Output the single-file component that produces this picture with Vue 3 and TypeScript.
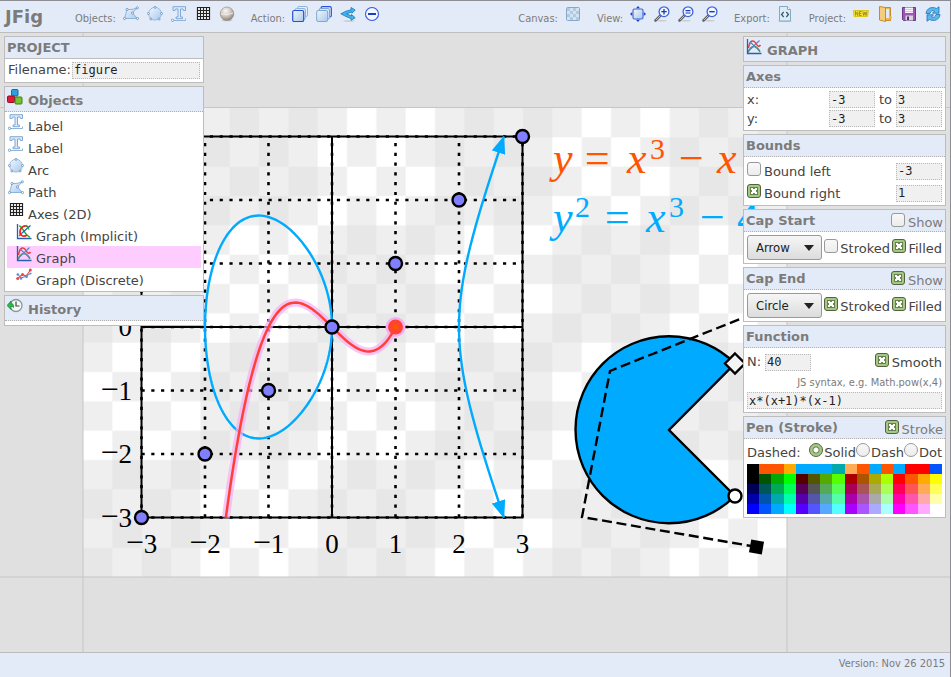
<script setup lang="ts">
import { reactive, ref } from 'vue'

type Tool = { icon: string; title: string }
type ToolGroup = { label: string; tools: Tool[] }
type SceneItem = { id: number; icon: string; name: string; nested?: boolean }
type Point = [number, number]

const createGroups: ToolGroup[] = [
  {
    label: 'Objects:',
    tools: [
      { icon: 'path', title: 'Path' },
      { icon: 'arc', title: 'Arc' },
      { icon: 'label', title: 'Label' },
      { icon: 'axes', title: 'Axes' },
      { icon: 'sphere', title: 'Sphere' },
    ],
  },
  {
    label: 'Action:',
    tools: [
      { icon: 'front', title: 'Bring to front' },
      { icon: 'back', title: 'Send to back' },
      { icon: 'fork', title: 'Duplicate' },
      { icon: 'remove', title: 'Delete' },
    ],
  },
]

const viewGroups: ToolGroup[] = [
  { label: 'Canvas:', tools: [{ icon: 'checker', title: 'Background' }] },
  {
    label: 'View:',
    tools: [
      { icon: 'fit', title: 'Fit' },
      { icon: 'zoom-in', title: 'Zoom in' },
      { icon: 'zoom-reset', title: 'Actual size' },
      { icon: 'zoom-out', title: 'Zoom out' },
    ],
  },
  { label: 'Export:', tools: [{ icon: 'code', title: 'Export source' }] },
  {
    label: 'Project:',
    tools: [
      { icon: 'new', title: 'New' },
      { icon: 'open', title: 'Open' },
      { icon: 'save', title: 'Save' },
      { icon: 'reload', title: 'Reload' },
    ],
  },
]

const sceneItems: SceneItem[] = [
  { id: 1, icon: 'label', name: 'Label' },
  { id: 2, icon: 'label', name: 'Label' },
  { id: 3, icon: 'arc', name: 'Arc' },
  { id: 4, icon: 'path', name: 'Path' },
  { id: 5, icon: 'axes', name: 'Axes (2D)' },
  { id: 6, icon: 'implicit', name: 'Graph (Implicit)', nested: true },
  { id: 7, icon: 'graph', name: 'Graph', nested: true },
  { id: 8, icon: 'discrete', name: 'Graph (Discrete)', nested: true },
]

const selected = ref(7)
const filename = ref('figure')
const axes = reactive({ x: ['-3', '3'], y: ['-3', '3'] })
const bounds = reactive({ left: false, right: true, min: '-3', max: '1' })
const caps = reactive([
  { key: 'start', title: 'Cap Start', show: false, shape: 'Arrow', stroked: false, filled: true },
  { key: 'end', title: 'Cap End', show: true, shape: 'Circle', stroked: true, filled: true },
])
const fn = reactive({ n: '40', smooth: true, body: 'x*(x+1)*(x-1)' })
const pen = reactive({ stroke: true, dash: 'Solid' })

const recent = '#000 #f50 #f50 #fa0 #0af #0af #0af #0aa #fa5 #f50 #0af #f50 #0af #f00 #f00 #05f'.split(' ')
const steps = ['0', '5', 'a', 'f']
const swatches = recent.concat(
  steps.flatMap((b) => steps.flatMap((r) => steps.map((g) => `#${r}${g}${b}`))),
)

// Plot space: one unit is 63.5px, y grows upwards.
const unit = 63.5
const ticks = [-3, -2, -1, 0, 1, 2, 3]
const lowerTicks = ticks.filter((t) => t <= 0)
const minus = '\u2212'

function toPath(points: Point[]): string {
  return points
    .map(([x, y], i) => `${i ? 'L' : 'M'}${(x * unit).toFixed(2)} ${(-y * unit).toFixed(2)}`)
    .join('')
}

function sample(from: number, to: number, count: number, f: (t: number) => Point): Point[] {
  return Array.from({ length: count + 1 }, (_, i) => f(from + ((to - from) * i) / count))
}

const elliptic = (x: number) => Math.sqrt(Math.max(0, x * x * x - 4 * x))
const oval = toPath(
  sample(0, 2 * Math.PI, 160, (t) => {
    const x = -1 + Math.cos(t)
    return [x, Math.sign(Math.sin(t)) * elliptic(x)]
  }),
)
const branch = toPath(
  sample(-1, 1, 40, (t) => {
    const x = 2 + 0.7065 * t * t
    return [x, Math.sign(t) * elliptic(x)]
  }),
)
const cubic = toPath(sample(-1.672, 1, 80, (x) => [x, x * x * x - x]))

// Background cells: a fine checker whose tint alternates every four cells.
const cell = 88 / 3
const cells = Array.from({ length: 64 }, (_, k) => ({ i: k % 8, j: Math.floor(k / 8) }))
  .filter(({ i, j }) => (i + j) % 2 === 1)
  .map(({ i, j }) => ({
    x: i * cell,
    y: j * cell,
    fill: (Math.floor(i / 4) + Math.floor(j / 4)) % 2 ? '#e7e7e7' : '#ffffff',
  }))
</script>

<template>
  <div class="app">
    <svg class="sprite" aria-hidden="true">
      <defs>
        <linearGradient id="g-blue" x1="0" y1="0" x2="1" y2="1">
          <stop offset="0" stop-color="#f0f6fd" />
          <stop offset="1" stop-color="#a9c9ea" />
        </linearGradient>
        <radialGradient id="g-ball" cx=".4" cy=".3" r=".75">
          <stop offset="0" stop-color="#fbf8f5" />
          <stop offset=".5" stop-color="#cfc6bf" />
          <stop offset="1" stop-color="#85796f" />
        </radialGradient>
      </defs>
      <symbol id="i-path" viewBox="0 0 16 16">
        <path d="M4 3.500Q9 4 14 2L9.500 7L14.300 12.500H1.600z" fill="url(#g-blue)" stroke="#8fb4da" />
        <g fill="#fff" stroke="#5d8fc2" stroke-width=".8">
          <circle cx="4" cy="3.500" r="1.100" /><circle cx="14.300" cy="1.800" r="1.100" /><circle cx="9.500" cy="7" r="1.100" />
          <circle cx="14.500" cy="12.500" r="1.100" /><circle cx="1.500" cy="12.500" r="1.100" />
        </g>
      </symbol>
      <symbol id="i-arc" viewBox="0 0 16 16">
        <circle cx="8" cy="7.700" r="6.400" fill="url(#g-blue)" stroke="#9dbde0" />
        <g fill="#fff" stroke="#5d8fc2" stroke-width=".8">
          <circle cx="8" cy="1.400" r="1" /><circle cx="14.600" cy="7.500" r="1" /><circle cx="1.400" cy="7.500" r="1" />
          <circle cx="3.800" cy="13" r="1" /><circle cx="12.200" cy="13" r="1" />
        </g>
      </symbol>
      <symbol id="i-label" viewBox="0 0 16 16">
        <path d="M2 .7H14.500V4.500H12.500L12 3H9.500V11H11.500V12.700H5V11H7V3H4.500L4 4.500H2z" fill="#dceafa" stroke="#7fa9d6" />
        <path d="M1.500 14.500H14.500V12.500" fill="none" stroke="#8fb4da" />
        <circle cx="1.500" cy="14.300" r="1.200" fill="#fff" stroke="#5d8fc2" stroke-width=".8" />
      </symbol>
      <symbol id="i-axes" viewBox="0 0 16 16">
        <rect x="2" y="1" width="12.500" height="12.500" fill="#fff" />
        <path d="M2 1.500H15M2 4.500H15M2 7.500H15M2 10.500H15M2 13.500H15M2.500 1V14M5.500 1V14M8.500 1V14M11.500 1V14M14.500 1V14" stroke="#222" stroke-width="1.200" />
      </symbol>
      <symbol id="i-sphere" viewBox="0 0 16 16">
        <ellipse cx="8" cy="14.300" rx="5.500" ry="1" fill="#c4c8d0" />
        <circle cx="8" cy="7.800" r="6.800" fill="url(#g-ball)" stroke="#91867d" stroke-width=".6" />
        <path d="M2 8Q8 10 14 7" fill="none" stroke="#eee9e4" />
      </symbol>
      <symbol id="i-front" viewBox="0 0 16 16">
        <rect x="5.500" y=".5" width="10" height="10" rx="1.500" fill="#e8f1fb" stroke="#8fb4da" />
        <rect x="3" y="2.500" width="10.500" height="10.500" rx="1.500" fill="#d9e8f8" stroke="#8fb4da" />
        <rect x=".7" y="4.500" width="11" height="11" rx="1.500" fill="url(#g-blue)" stroke="#2450d8" stroke-width="1.200" />
      </symbol>
      <symbol id="i-back" viewBox="0 0 16 16">
        <rect x="5" y=".7" width="10.300" height="10.300" rx="1.500" fill="#e8f1fb" stroke="#2450d8" stroke-width="1.200" />
        <rect x="3" y="2.500" width="10.500" height="10.500" rx="1.500" fill="#d9e8f8" stroke="#7ea6d2" />
        <rect x=".7" y="4.500" width="11" height="11" rx="1.500" fill="url(#g-blue)" stroke="#7ea6d2" />
      </symbol>
      <symbol id="i-fork" viewBox="0 0 16 16">
        <ellipse cx="9" cy="15" rx="6" ry=".7" fill="#c0c8d4" />
        <path d="M.8 7.800L6 5.200L11 3.800V1.500L15.200 4L12 7.200V6L6.500 7.800L11.500 10V8.500L15.200 11.800L11 14.300V12.500L6 10.500z" fill="#41b4ee" stroke="#1876b8" stroke-width=".8" stroke-linejoin="round" />
      </symbol>
      <symbol id="i-remove" viewBox="0 0 16 16">
        <circle cx="8" cy="8" r="6.500" fill="#f3f7fe" stroke="#3558dd" stroke-width="1.100" />
        <path d="M4 8H12" stroke="#1c3fc4" stroke-width="2" />
      </symbol>
      <symbol id="i-checker" viewBox="0 0 16 16">
        <rect x="1.500" y="1.500" width="13" height="13" rx="1" fill="#d3e3f1" stroke="#84a9cc" />
        <path d="M2 2h3v3H2zM8 2h3v3H8zM5 5h3v3H5zM11 5h3v3h-3zM2 8h3v3H2zM8 8h3v3H8zM5 11h3v3H5zM11 11h3v3h-3z" fill="#b0cadf" />
      </symbol>
      <symbol id="i-fit" viewBox="0 0 16 16">
        <rect x="3" y="3" width="10" height="10" rx="1.500" fill="url(#g-blue)" stroke="#3b62dd" stroke-width="1.100" />
        <path d="M8 0L10 2.200H6zM8 16L10 13.800H6zM0 8L2.200 6V10zM16 8L13.800 6V10z" fill="#1c3fc4" />
      </symbol>
      <symbol id="i-lens" viewBox="0 0 16 16">
        <ellipse cx="8" cy="14.700" rx="5" ry=".8" fill="#c5cad3" />
        <path d="M6.500 9.500L1.500 14.500" stroke="#5f646c" stroke-width="2.600" stroke-linecap="round" />
        <path d="M6.500 9.500L1.800 14.200" stroke="#b9bec6" />
        <circle cx="10" cy="5.700" r="4.900" fill="#f3f8ff" stroke="#3c63dc" stroke-width="1.300" />
      </symbol>
      <symbol id="i-zoom-in" viewBox="0 0 16 16">
        <use href="#i-lens" width="16" height="16" />
        <path d="M7.300 5.700H12.700M10 3V8.400" stroke="#1638b8" stroke-width="1.300" />
      </symbol>
      <symbol id="i-zoom-reset" viewBox="0 0 16 16">
        <use href="#i-lens" width="16" height="16" />
        <path d="M7.500 4.600H12.500M7.500 7H12.500" stroke="#1638b8" stroke-width="1.100" />
      </symbol>
      <symbol id="i-zoom-out" viewBox="0 0 16 16">
        <use href="#i-lens" width="16" height="16" />
        <path d="M7.300 5.700H12.700" stroke="#1638b8" stroke-width="1.400" />
      </symbol>
      <symbol id="i-code" viewBox="0 0 16 16">
        <ellipse cx="8" cy="15.200" rx="7" ry=".7" fill="#bcc3cf" />
        <path d="M2.500.5H10.500L13.500 3.500V15H2.500z" fill="#dcecf7" stroke="#86a9c2" />
        <path d="M10.500.5V3.500H13.500" fill="#fff" stroke="#86a9c2" />
        <path d="M6.700 6L4.500 8.500L6.700 11M9.300 6L11.500 8.500L9.300 11" fill="none" stroke="#35566e" stroke-width="1.200" />
      </symbol>
      <symbol id="i-new" viewBox="0 0 16 16">
        <path d="M.5 4.500H15.500L14.500 10.500H1z" fill="#f4e13b" stroke="#d9c520" />
        <path d="M2.500 9.500V5.500L4.800 9.500V5.500M8.700 5.500H6.500V9.500H8.700M6.500 7.500H8.300M9.900 5.500L10.700 9.500L11.900 6L13 9.500L13.900 5.500" fill="none" stroke="#94800c" stroke-width=".8" />
      </symbol>
      <symbol id="i-open" viewBox="0 0 16 16">
        <path d="M8 1.500H13.500V14.500H8z" fill="#e9b555" stroke="#c68a2c" />
        <rect x="9" y="3" width="3" height="9" fill="#dcebf8" />
        <path d="M2.500.5L8.500 1.500V15.500L2.500 14z" fill="#f5cd7a" stroke="#c68a2c" />
        <circle cx="13.500" cy="11.500" r="1.500" fill="#f4b642" />
      </symbol>
      <symbol id="i-save" viewBox="0 0 16 16">
        <path d="M1.500 1.500H14.500V14.500H2.500L1.500 13.500z" fill="#9c55b4" stroke="#673a82" />
        <rect x="4" y="1.500" width="8" height="5.500" fill="#f5f2f8" />
        <path d="M4 3.500H12M4 5.500H12" stroke="#c9bfd2" stroke-width=".7" />
        <rect x="4.500" y="9.500" width="7.500" height="5" fill="#d9d3df" />
        <rect x="6" y="10.500" width="2" height="3.500" fill="#573270" />
      </symbol>
      <symbol id="i-reload" viewBox="0 0 16 16">
        <path d="M1 7.500C1.500 2.500 6.500 0 11.500 2.500L14 .8V7.200H7.500L9.500 5C7.500 4 5.500 5 5 7.500z" fill="#5fb8ec" stroke="#1a72b8" stroke-width=".8" stroke-linejoin="round" />
        <path d="M15 8.500C14.500 13.500 9.500 16 4.500 13.500L2 15.200V8.800H8.500L6.500 11C8.500 12 10.500 11 11 8.500z" fill="#5fb8ec" stroke="#1a72b8" stroke-width=".8" stroke-linejoin="round" />
      </symbol>
      <symbol id="i-frame" viewBox="0 0 16 16">
        <path d="M1.500 0V14.500H15.500" fill="none" stroke="#2a5fae" stroke-width="1.300" />
      </symbol>
      <symbol id="i-graph" viewBox="0 0 16 16">
        <path d="M2 13.500C5 6 10 5 14 13" fill="none" stroke="#3d9c49" stroke-width="1.500" />
        <path d="M2.500 9C4 0 8 1 10 4.500S13 8 14.500 6" fill="none" stroke="#f03a3a" stroke-width="1.500" />
        <path d="M2.500 12L13.500 1.500M4 3L14 12" fill="none" stroke="#5b85bf" stroke-width="1.100" />
        <use href="#i-frame" width="16" height="16" />
      </symbol>
      <symbol id="i-implicit" viewBox="0 0 16 16">
        <path d="M3 2C6 1 9 12 14 13M3 12L6 9" fill="none" stroke="#14b83a" stroke-width="1.500" />
        <path d="M12.500 3.500C9 0 4.500 3 4 7.500S8 13 11 11" fill="none" stroke="#f01f1f" stroke-width="1.700" />
        <path d="M6 9L14.500 1.500" stroke="#2a5fae" stroke-width="1.300" />
        <path d="M10 1L13 5.500" stroke="#14b83a" stroke-width="1.300" />
        <use href="#i-frame" width="16" height="16" />
      </symbol>
      <symbol id="i-discrete" viewBox="0 0 16 16">
        <path d="M2 6.500L5 10L10.500 8L14.500 5.500" fill="none" stroke="#4b7fc4" stroke-width="1" />
        <path d="M1.500 10.500L6.500 6.500L10 8L14.500 2" fill="none" stroke="#ef4545" stroke-width="1.100" />
        <g fill="#ef4545"><circle cx="1.700" cy="10.500" r="1.500" /><circle cx="6.500" cy="6.500" r="1.500" /><circle cx="14.300" cy="2" r="1.500" /></g>
        <g fill="#5b8fd6"><circle cx="1.800" cy="6.500" r="1.300" /><circle cx="5" cy="10.500" r="1.300" /><circle cx="10.500" cy="8.500" r="1.500" /><circle cx="14.500" cy="5.500" r="1.100" /></g>
      </symbol>
      <symbol id="i-cubes" viewBox="0 0 16 16">
        <rect x="4.500" y=".5" width="6.500" height="6.500" rx="1" fill="#2d9fe0" stroke="#1769a3" />
        <rect x=".5" y="7" width="7" height="6.500" rx="1" fill="#e3173a" stroke="#9a0b22" />
        <rect x="8" y="8" width="7" height="7" rx="1" fill="#74c22e" stroke="#417d12" />
      </symbol>
      <symbol id="i-history" viewBox="0 0 16 16">
        <circle cx="9" cy="7.500" r="6" fill="#f5f7f7" stroke="#8a979c" stroke-width="1.300" />
        <path d="M9 3.500V8H12.500" fill="none" stroke="#444" stroke-width="1.200" />
        <path d="M0 7.500L4 3V5.500C6 5.500 7 7 6.500 9.500C6 8.500 5.500 8.500 4 8.500V11.500z" fill="#2fb84a" stroke="#168030" stroke-width=".7" />
      </symbol>
    </svg>

    <header class="bar toolbar">
      <h1>JFig</h1>
      <nav class="tools" aria-label="Editing">
        <div v-for="group in createGroups" :key="group.label" class="tool-group">
          <span class="tool-label">{{ group.label }}</span>
          <div class="tool-icons">
            <button v-for="tool in group.tools" :key="tool.icon" type="button" class="tool" :aria-label="tool.title">
              <svg class="icon"><use :href="'#i-' + tool.icon" /></svg>
            </button>
          </div>
        </div>
      </nav>
      <nav class="tools tools-end" aria-label="View and project">
        <div v-for="group in viewGroups" :key="group.label" class="tool-group">
          <span class="tool-label">{{ group.label }}</span>
          <div class="tool-icons">
            <button v-for="tool in group.tools" :key="tool.icon" type="button" class="tool" :aria-label="tool.title">
              <svg class="icon"><use :href="'#i-' + tool.icon" /></svg>
            </button>
          </div>
        </div>
      </nav>
    </header>

    <main class="stage">
      <svg class="drawing" role="img" aria-label="Drawing canvas">
        <defs>
          <pattern id="cells" :width="cell * 8" :height="cell * 8" patternUnits="userSpaceOnUse">
            <rect :width="cell * 8" :height="cell * 8" fill="#efefef" />
            <rect v-for="(c, k) in cells" :key="k" :x="c.x" :y="c.y" :width="cell" :height="cell" :fill="c.fill" />
          </pattern>
          <marker id="arrow" viewBox="0 0 18 14" refX="17" refY="7" markerWidth="18" markerHeight="14" markerUnits="userSpaceOnUse" orient="auto-start-reverse">
            <path d="M0 0L18 7L0 14z" fill="#0af" />
          </marker>
        </defs>
        <g transform="translate(83 75)">
          <rect width="704" height="469" fill="url(#cells)" />
        </g>
        <path class="guide" d="M83 0V620M787 0V620M0 74.500H951M0 544H951" />

        <g transform="translate(332 294)">
          <g class="dots">
            <path v-for="t in ticks" :key="'v' + t" :d="`M${t * unit} ${3 * unit}V${-3 * unit}`" />
            <path v-for="t in ticks" :key="'h' + t" :d="`M${-3 * unit} ${t * unit}H${3 * unit}`" />
          </g>
          <path class="frame" :d="`M${-3 * unit} ${-3 * unit}H${3 * unit}V${3 * unit}H${-3 * unit}zM${-3 * unit} 0H${3 * unit}M0 ${-3 * unit}V${3 * unit}`" />
          <g class="tick-labels">
            <text v-for="t in ticks" :key="'x' + t" :x="t * unit" y="226" text-anchor="middle"><tspan v-if="t < 0" class="minus">{{ minus }}</tspan>{{ Math.abs(t) }}</text>
            <text v-for="t in lowerTicks" :key="'y' + t" x="-200" :y="9 - t * unit" text-anchor="end"><tspan v-if="t < 0" class="minus">{{ minus }}</tspan>{{ Math.abs(t) }}</text>
          </g>
          <path class="implicit" :d="oval" />
          <path class="implicit" :d="branch" marker-start="url(#arrow)" marker-end="url(#arrow)" />
          <path class="halo" :d="cubic" />
          <circle :cx="unit" cy="0" r="10" class="halo-dot" />
          <path class="cubic" :d="cubic" />
          <circle v-for="t in ticks" :key="'p' + t" class="point" :cx="t * unit" :cy="-t * unit" r="6.500" />
          <circle :cx="unit" cy="0" r="7.500" fill="#ff4433" />
          <circle :cx="unit" cy="0" r="3" fill="#ff5500" />
        </g>

        <g class="formula" fill="#ff5500">
          <text x="553" y="140">y</text>
          <text x="582" y="140">=</text>
          <text x="627" y="140">x</text>
          <text x="650" y="126" class="sup">3</text>
          <text x="676" y="140">{{ minus }}</text>
          <text x="717" y="140">x</text>
        </g>
        <g class="formula" fill="#00aaff">
          <text x="553" y="199">y</text>
          <text x="575" y="184" class="sup">2</text>
          <text x="602" y="199">=</text>
          <text x="646" y="199">x</text>
          <text x="669" y="184" class="sup">3</text>
          <text x="697" y="199">{{ minus }}</text>
          <text x="737" y="199" class="digit">4</text>
        </g>

        <path class="outline" fill="#00aaff" d="M735 330.500A93.500 93.500 0 1 0 735 463L669 397z" />
        <path class="outline dashed" d="M780 270L610 338L582 484L757 514" />
        <rect x="750" y="507.500" width="13" height="13" transform="rotate(10 757 514)" />
        <path class="outline" fill="#f4f4f4" d="M735 320.500L745 330.500L735 340.500L725 330.500z" />
        <circle class="outline" fill="#fff" cx="735" cy="463" r="6.500" />
      </svg>

      <aside class="column left" aria-label="Project">
        <section class="panel">
          <h2 class="panel-head solid">PROJECT</h2>
          <div class="row filename">
            <label for="filename">Filename:</label>
            <input id="filename" v-model="filename" class="field grow" type="text" />
          </div>
        </section>
        <section class="panel">
          <h2 class="panel-head tall"><svg class="icon"><use href="#i-cubes" /></svg>Objects</h2>
          <ul class="items">
            <li v-for="item in sceneItems" :key="item.id">
              <button
                type="button"
                class="item"
                :class="{ nested: item.nested, active: item.id === selected }"
                @click="selected = item.id"
              >
                <svg class="icon"><use :href="'#i-' + item.icon" /></svg>{{ item.name }}
              </button>
            </li>
          </ul>
        </section>
        <section class="panel history">
          <h2 class="panel-head tall"><svg class="icon"><use href="#i-history" /></svg>History</h2>
        </section>
      </aside>

      <aside class="column right" aria-label="Properties">
        <section class="panel">
          <h2 class="panel-head tall bare"><svg class="icon"><use href="#i-graph" /></svg>GRAPH</h2>
        </section>

        <section class="panel">
          <h3 class="panel-head">Axes</h3>
          <div class="body axes">
            <div class="row">
              <label for="x-from" class="grow">x:</label>
              <input id="x-from" v-model="axes.x[0]" class="field num" type="text" />
              <label for="x-to" class="to">to</label>
              <input id="x-to" v-model="axes.x[1]" class="field num" type="text" />
            </div>
            <div class="row">
              <label for="y-from" class="grow">y:</label>
              <input id="y-from" v-model="axes.y[0]" class="field num" type="text" />
              <label for="y-to" class="to">to</label>
              <input id="y-to" v-model="axes.y[1]" class="field num" type="text" />
            </div>
          </div>
        </section>

        <section class="panel">
          <h3 class="panel-head">Bounds</h3>
          <div class="body bounds">
            <div class="row">
              <label class="check grow"><input v-model="bounds.left" type="checkbox" />Bound left</label>
              <input v-model="bounds.min" class="field num" type="text" aria-label="Left bound" />
            </div>
            <div class="row">
              <label class="check grow"><input v-model="bounds.right" type="checkbox" />Bound right</label>
              <input v-model="bounds.max" class="field num" type="text" aria-label="Right bound" />
            </div>
          </div>
        </section>

        <section v-for="cap in caps" :key="cap.key" class="panel">
          <div class="panel-head">
            <h3>{{ cap.title }}</h3>
            <label class="check"><input v-model="cap.show" type="checkbox" />Show</label>
          </div>
          <div class="body row cap">
            <span class="select">
              <select v-model="cap.shape" :aria-label="cap.title + ' shape'">
                <option>Arrow</option>
                <option>Circle</option>
                <option>Square</option>
              </select>
              <svg class="caret" viewBox="0 0 10 6" aria-hidden="true"><path d="M0 0H10L5 6z" fill="#222" /></svg>
            </span>
            <label class="check"><input v-model="cap.stroked" type="checkbox" />Stroked</label>
            <label class="check"><input v-model="cap.filled" type="checkbox" />Filled</label>
          </div>
        </section>

        <section class="panel">
          <h3 class="panel-head">Function</h3>
          <div class="body function">
            <div class="row">
              <label for="samples">N:</label>
              <input id="samples" v-model="fn.n" class="field num" type="text" />
              <label class="check end"><input v-model="fn.smooth" type="checkbox" />Smooth</label>
            </div>
            <label for="fn-body" class="hint">JS syntax, e.g. Math.pow(x,4)</label>
            <input id="fn-body" v-model="fn.body" class="field wide" type="text" />
          </div>
        </section>

        <section class="panel">
          <div class="panel-head">
            <h3>Pen (Stroke)</h3>
            <label class="check"><input v-model="pen.stroke" type="checkbox" />Stroke</label>
          </div>
          <div class="body pen">
            <div class="row between">
              <span>Dashed:</span>
              <span class="radios">
                <label v-for="d in ['Solid', 'Dash', 'Dot']" :key="d" class="check">
                  <input v-model="pen.dash" type="radio" name="dash" :value="d" />{{ d }}
                </label>
              </span>
            </div>
            <div class="palette">
              <button v-for="(c, k) in swatches" :key="k" type="button" :style="{ background: c }" :aria-label="c"></button>
            </div>
          </div>
        </section>
      </aside>
    </main>

    <footer class="bar status">Version: Nov 26 2015</footer>
  </div>
</template>

<style>
body {
  background: #e0e0e0;
}
</style>

<style scoped>
.app {
  --line: #bdbdbd;
  --head: #e4ebf8;
  box-sizing: border-box;
  display: flex;
  flex-direction: column;
  min-height: 100vh;
  border-top: 1px solid #8c8c92;
  border-right: 1px solid #8c8c92;
  background: #e0e0e0;
  color: #444;
  font: 13px/20px "DejaVu Sans", sans-serif;
}
.app * {
  box-sizing: border-box;
}
.sprite {
  position: absolute;
  width: 0;
  height: 0;
}
h1,
h2,
h3,
ul {
  margin: 0;
  padding: 0;
  list-style: none;
}
button {
  padding: 0;
  border: 0;
  background: none;
  color: inherit;
  font: inherit;
}
.icon {
  flex: none;
  width: 16px;
  height: 16px;
}
.bar {
  display: flex;
  background: var(--head);
  color: #7b7b7b;
  font: 11px/16px "DejaVu Sans Condensed", "DejaVu Sans", sans-serif;
  font-stretch: condensed;
}
.toolbar {
  height: 32px;
  padding: 5px 9px 0 5px;
  border-bottom: 1px solid var(--line);
}
.toolbar h1 {
  width: 70px;
  font: bold 18px/22px "DejaVu Sans", sans-serif;
}
.tools {
  display: flex;
  gap: 16px;
}
.tools-end {
  margin-left: auto;
}
.tool-group {
  display: flex;
  align-items: flex-start;
  gap: 7px;
}
.tool-icons {
  display: flex;
  gap: 8px;
}
.tool-label {
  padding-top: 5px;
}
.tool {
  width: 16px;
  height: 16px;
}
.tool .icon {
  display: block;
}
.status {
  justify-content: flex-end;
  padding: 3px 5px 5px;
  border-top: 1px solid var(--line);
}

.stage {
  position: relative;
  display: flex;
  flex: 1;
  justify-content: space-between;
  align-items: flex-start;
  padding: 3px 4px;
}
.drawing {
  position: absolute;
  inset: 0;
  width: 100%;
  height: 100%;
}
.guide {
  fill: none;
  stroke: #c6c6c6;
}
.dots path {
  fill: none;
  stroke: #000;
  stroke-width: 2.600;
  stroke-dasharray: 3.200 6.570;
}
.frame {
  fill: none;
  stroke: #000;
  stroke-width: 2;
}
.tick-labels {
  font: 27px "Liberation Serif", serif;
}
.minus {
  font-size: 32px;
}
.implicit {
  fill: none;
  stroke: #0af;
  stroke-width: 2.400;
}
.halo {
  fill: none;
  stroke: #f5aef5;
  stroke-opacity: 0.7;
  stroke-width: 8;
}
.halo-dot {
  fill: #f5aef5;
}
.cubic {
  fill: none;
  stroke: #ff4038;
  stroke-width: 2.500;
}
.point {
  fill: #8080ff;
  stroke: #000;
  stroke-width: 2.400;
}
.formula {
  font: italic 44px "Liberation Serif", serif;
}
.formula .sup {
  font: 30px "Liberation Serif", serif;
}
.formula .digit {
  font-style: normal;
}
.outline {
  stroke: #000;
  stroke-width: 2.400;
}
.dashed {
  fill: none;
  stroke-dasharray: 10 4.670;
}

.column {
  position: relative;
  display: flex;
  flex-direction: column;
  gap: 3px;
}
.left {
  width: 200px;
}
.right {
  width: 203px;
}
.panel {
  border: 1px solid var(--line);
  background: #fff;
}
.panel-head {
  display: flex;
  justify-content: space-between;
  height: 22px;
  padding: 0 2px;
  border-bottom: 1px dotted #b0b0b0;
  background: var(--head);
  color: #7b7b7b;
  font-size: 13px;
  line-height: 21px;
}
.panel-head.solid {
  border-bottom: 1px solid var(--line);
}
.panel-head h3 {
  font-size: 13px;
}
.panel-head.tall {
  justify-content: flex-start;
  gap: 5px;
  height: 25px;
  padding-top: 2px;
  line-height: 24px;
}
.panel-head.bare {
  height: 24px;
  border-bottom: 0;
}
.history {
  padding-bottom: 4px;
}
.row {
  display: flex;
  align-items: center;
}
.grow {
  flex: 1;
  min-width: 0;
}
.filename {
  gap: 1px;
  padding: 1px 3px 2px;
}
.field {
  height: 17px;
  padding: 0 1px;
  border: 1px dotted #b8b8b8;
  background: #f0f0f0;
  color: #222;
  font: 12px/15px "DejaVu Sans Mono", monospace;
}
.num {
  width: 46px;
}
.items {
  padding: 2px 2px 1px;
}
.item {
  display: flex;
  gap: 4px;
  width: 100%;
  height: 22px;
  padding-left: 1px;
  line-height: 26px;
  text-align: left;
}
.item.nested {
  padding-left: 9px;
}
.item.active {
  background: #fcf;
}

.body {
  padding: 3px;
}
.axes {
  display: grid;
  gap: 2px;
}
.axes .row {
  height: 17px;
}
.to {
  padding: 0 4px;
}
.bounds {
  padding-bottom: 1px;
}
.bounds .row {
  height: 22px;
}
.check {
  display: flex;
  gap: 3px;
  line-height: 23px;
  white-space: nowrap;
}
.panel-head .check {
  padding-top: 1px;
}
.end {
  margin-left: auto;
}
.check input {
  flex: none;
  width: 14px;
  height: 14px;
  margin: 2px 0 0;
  border: 1px solid #999;
  border-radius: 3px;
  background: linear-gradient(#f8f8f8, #ececec);
  appearance: none;
}
.check input[type="checkbox"]:checked {
  border-color: #56603f;
  background:
    linear-gradient(#6b8c50, #6b8c50) 5px 3px / 2px 1px no-repeat,
    linear-gradient(#6b8c50, #6b8c50) 5px 8px / 2px 1px no-repeat,
    linear-gradient(#6b8c50, #6b8c50) 3px 5px / 1px 2px no-repeat,
    linear-gradient(#6b8c50, #6b8c50) 8px 5px / 1px 2px no-repeat,
    linear-gradient(#fff, #fff) 3px 3px / 6px 6px no-repeat,
    linear-gradient(#6b8050, #6b8050) 2px 2px / 8px 8px no-repeat,
    #a3c984;
}
.check input[type="radio"] {
  border-radius: 50%;
}
.check input[type="radio"]:checked {
  border-color: #56603f;
  background: radial-gradient(circle, #fff 2px, #6b8050 3px, #a3c984 4px);
}
.cap {
  justify-content: space-between;
}
.cap .check {
  gap: 2px;
  padding-top: 2px;
}
.select {
  position: relative;
}
.select select {
  display: block;
  width: 75px;
  height: 25px;
  padding: 0 8px;
  border: 1px solid #999;
  border-radius: 3px;
  background: linear-gradient(#f6f6f6, #dcdcdc);
  color: #222;
  font: 13px "DejaVu Sans Condensed", "DejaVu Sans", sans-serif;
  font-stretch: condensed;
  appearance: none;
}
.caret {
  position: absolute;
  top: 10px;
  right: 8px;
  width: 10px;
  height: 6px;
  pointer-events: none;
}
.function {
  display: grid;
  gap: 2px;
}
.function .row {
  gap: 4px;
  height: 22px;
}
.function .check {
  gap: 3px;
}
.hint {
  color: #7b7b7b;
  font: 11px/15px "DejaVu Sans Condensed", "DejaVu Sans", sans-serif;
  font-stretch: condensed;
  text-align: right;
}
.wide {
  width: 100%;
}
.between {
  justify-content: space-between;
  height: 25px;
  padding-top: 2px;
}
.pen {
  padding-top: 0;
}
.radios {
  display: flex;
}
.radios .check {
  gap: 1px;
}
.palette {
  display: grid;
  grid-template-columns: repeat(16, 1fr);
}
.palette button {
  height: 10px;
}
</style>
